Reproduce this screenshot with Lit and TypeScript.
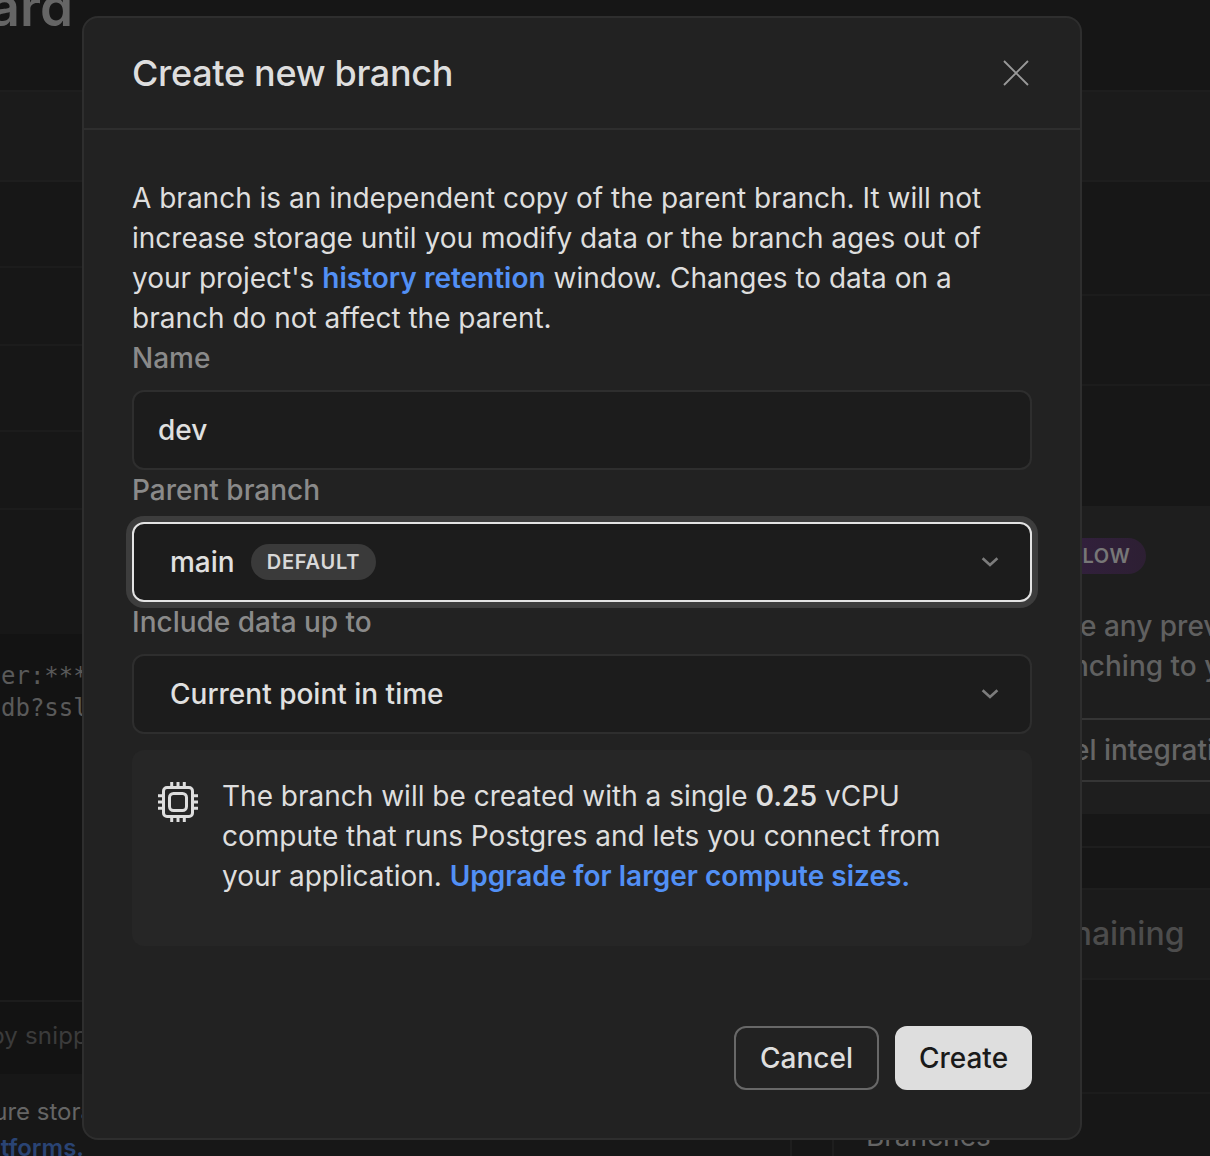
import { LitElement, html, css, svg } from "lit";
import { customElement, property } from "lit/decorators.js";

@customElement("page-backdrop")
class PageBackdrop extends LitElement {
  static styles = css`
    :host { display: block; height: 1156px; overflow: hidden; background: #161616; color: #656565; font-size: 28px; white-space: nowrap; }
    * { box-sizing: border-box; }
    .title { height: 90px; overflow: hidden; }
    .title h1 { margin: -29px 0 0; width: 73px; display: flex; justify-content: flex-end; font-size: 53px; line-height: 72px; font-weight: 600; }
    .columns { display: grid; grid-template-columns: 792px 378px; column-gap: 40px; }
    .column { display: flex; flex-direction: column; min-width: 0; overflow: hidden; }
    .card { border: 2px solid #1e1e1e; border-left: 0; background: #171717; }
    .right .card { border-left: 2px solid #1e1e1e; border-right: 0; width: 378px; overflow: hidden; }
    .head { height: 90px; background: #1b1b1b; border-bottom: 2px solid #1e1e1e; }
    .row { border-bottom: 2px solid #1c1c1c; }
    .h78 { height: 78px; } .h86 { height: 86px; } .h90 { height: 90px; } .h114 { height: 114px; }
    .gap { height: 124px; }
    .code { height: 366px; background: #131313; padding-top: 26px; font-family: "DejaVu Sans Mono", monospace; font-size: 24px; line-height: 32px; color: #5a5a5a; }
    .code div { padding-left: 1px; }
    .hint { height: 74px; background: #131313; border-top: 2px solid #1c1c1c; font-size: 24px; line-height: 68px; letter-spacing: .2px; color: #3b3b3b; }
    .clip { width: 88px; display: flex; justify-content: flex-end; }
    .foot { padding-top: 20px; font-size: 24px; line-height: 36px; height: 84px; }
    .foot .wide { width: 94px; }
    .foot .link { width: 84px; }
    .foot b { font-weight: 600; color: #2a4474; }
    .spacer { height: 120px; }
    .promo { height: 308px; background: #1e1e1e; padding-top: 32px; }
    .flow { width: 312px; height: 36px; border-radius: 18px; background: linear-gradient(90deg, #32203d 75%, #2d1f33); text-align: right; padding-right: 15.5px; font-size: 20px; line-height: 36px; font-weight: 600; color: #777; letter-spacing: .6px; }
    .copy { line-height: 40px; margin-top: 32px; padding-left: 246px; font-weight: 500; color: #606060; }
    .copy .second-line { margin-left: -8px; }
    .outline { margin-top: 32px; height: 64px; border: 2px solid #353535; border-width: 2px 0; line-height: 60px; font-weight: 500; padding-left: 239px; }
    .tail { height: 32px; }
    .second { margin-top: 40px; }
    .second .head { font-size: 32px; line-height: 88px; font-weight: 500; color: #4c4c4c; text-align: right; padding-right: 25.5px; }
    .last { padding: 22px 0 0 32px; height: 130px; line-height: 40px; }
  `;
  render() {
    return html`
      <div class="title"><h1>Dashboard</h1></div>
      <div class="columns">
        <div class="column">
          <section class="card">
            <div class="head"></div>
            <div class="row h86"></div><div class="row h78"></div>
            <div class="row h86"></div><div class="row h78"></div>
            <div class="gap"></div>
            <div class="code"><div>er:***</div><div>db?ssl</div></div>
            <div class="hint"><div class="clip">py snipp</div></div>
            <div class="foot"><div class="clip wide">ure stora</div><div class="clip link"><b>tforms.</b></div></div>
          </section>
        </div>
        <div class="column right">
          <section class="card">
            <div class="head"></div>
            <div class="row h114"></div><div class="row h90"></div>
            <div class="spacer"></div>
            <div class="promo">
              <div class="flow">FLOW</div>
              <div class="copy">e any preview<br /><span class="second-line">nching to your</span></div>
              <div class="outline">el integration</div>
            </div>
            <div class="tail"></div>
          </section>
          <section class="card second">
            <div class="head">Remaining</div>
            <div class="row h114"></div>
            <div class="last">Branches</div>
          </section>
        </div>
      </div>`;
  }
}

const chevron = svg`<path d="M1.6 2.2 L9 9 L16.4 2.2" fill="none" stroke="#7c7c7c" stroke-width="2.6" />`;

@customElement("select-field")
class SelectField extends LitElement {
  @property() value = "";
  @property() badge = "";
  @property({ type: Boolean, reflect: true }) focused = false;
  static styles = css`
    :host { display: block; }
    .box { box-sizing: border-box; height: 80px; border: 2px solid #2e2e2e; border-radius: 12px; background: #1c1c1c; display: flex; align-items: center; padding: 0 31px 0 36px; color: #e0e0e0; font-weight: 500; }
    :host([focused]) .box { border-color: #e3e3e3; box-shadow: 0 0 0 6px #3d3d3d; }
    .badge { margin-left: 16px; height: 36px; padding: 0 16px; border-radius: 18px; background: #3a3a3a; font-size: 20px; line-height: 36px; font-weight: 600; letter-spacing: .8px; color: #d8d8d8; }
    svg { margin-left: auto; display: block; }
  `;
  render() {
    return html`<div class="box"><span>${this.value}</span>${this.badge ? html`<span class="badge">${this.badge}</span>` : null}
      <svg width="18" height="12" viewBox="0 0 18 12">${chevron}</svg></div>`;
  }
}

@customElement("branch-dialog")
class BranchDialog extends LitElement {
  static styles = css`
    :host { box-sizing: border-box; display: block; width: 1000px; height: 1124px; border: 2px solid #2e2e2e; border-radius: 16px; background: #222; overflow: hidden; color: #dedede; font-size: 28px; line-height: 40px; }
    * { box-sizing: border-box; }
    header { display: flex; align-items: center; justify-content: space-between; height: 112px; padding: 0 50px 0 48px; border-bottom: 2px solid #2e2e2e; }
    h2 { margin: 0; font-size: 36px; font-weight: 500; letter-spacing: -.31px; }
    main { padding: 48px 48px 0; }
    p { margin: 0; white-space: nowrap; }
    a { color: #5290f5; font-weight: 600; }
    label { display: block; color: #8a8a8a; font-weight: 500; }
    .input { height: 80px; border: 2px solid #2e2e2e; border-radius: 12px; background: #1c1c1c; padding: 0 24px; line-height: 76px; color: #e0e0e0; font-weight: 500; }
    .input, select-field { margin: 12px 0 0; }
    .note { display: flex; gap: 24px; height: 196px; margin-top: 16px; border-radius: 12px; background: #262626; padding: 26px; }
    .note svg { flex: none; margin-top: 6px; }
    b { font-weight: 600; }
    footer { display: flex; justify-content: flex-end; gap: 16px; margin-top: 80px; }
    button { font: inherit; font-weight: 500; height: 64px; border-radius: 12px; padding: 0; border: 2px solid #686868; background: transparent; color: #dedede; width: 145px; }
    .primary { width: 137px; background: #dedede; border-color: #dedede; color: #1a1a1a; }
  `;
  render() {
    return html`
      <header><h2>Create new branch</h2>
        <svg width="28" height="28" viewBox="0 0 28 28"><path d="M2 2L26 26M26 2L2 26" stroke="#999" stroke-width="1.9" /></svg>
      </header>
      <main>
        <p>A branch is an independent copy of the parent branch. It will not<br />increase storage until you modify data or the branch ages out of<br />your project's <a>history retention</a> window. Changes to data on a<br />branch do not affect the parent.</p>
        <label>Name</label><div class="input">dev</div>
        <label>Parent branch</label><select-field focused value="main" badge="DEFAULT"></select-field>
        <label>Include data up to</label><select-field value="Current point in time"></select-field>
        <div class="note">
          <svg width="40" height="40" viewBox="0 0 40 40" fill="none" stroke="#dedede" stroke-width="3">
            <rect x="5.5" y="5.5" width="29" height="29" rx="3.5" /><rect x="11.5" y="11.5" width="17" height="17" rx="4" />
            <path d="M13.7 0V5M20 0V5M26.3 0V5M13.7 35V40M20 35V40M26.3 35V40M0 13.7H5M0 20H5M0 26.3H5M35 13.7H40M35 20H40M35 26.3H40" />
          </svg>
          <p>The branch will be created with a single <b>0.25</b> vCPU<br />compute that runs Postgres and lets you connect from<br />your application. <a>Upgrade for larger compute sizes.</a></p>
        </div>
        <footer><button>Cancel</button><button class="primary">Create</button></footer>
      </main>`;
  }
}

@customElement("app-root")
class AppRoot extends LitElement {
  static styles = css`
    :host { display: block; position: relative; width: 1210px; height: 1156px; overflow: hidden; font-family: Inter, sans-serif; background: #161616; }
    branch-dialog { position: absolute; left: 82px; top: 16px; }
  `;
  render() {
    return html`<page-backdrop></page-backdrop><branch-dialog role="dialog"></branch-dialog>`;
  }
}
